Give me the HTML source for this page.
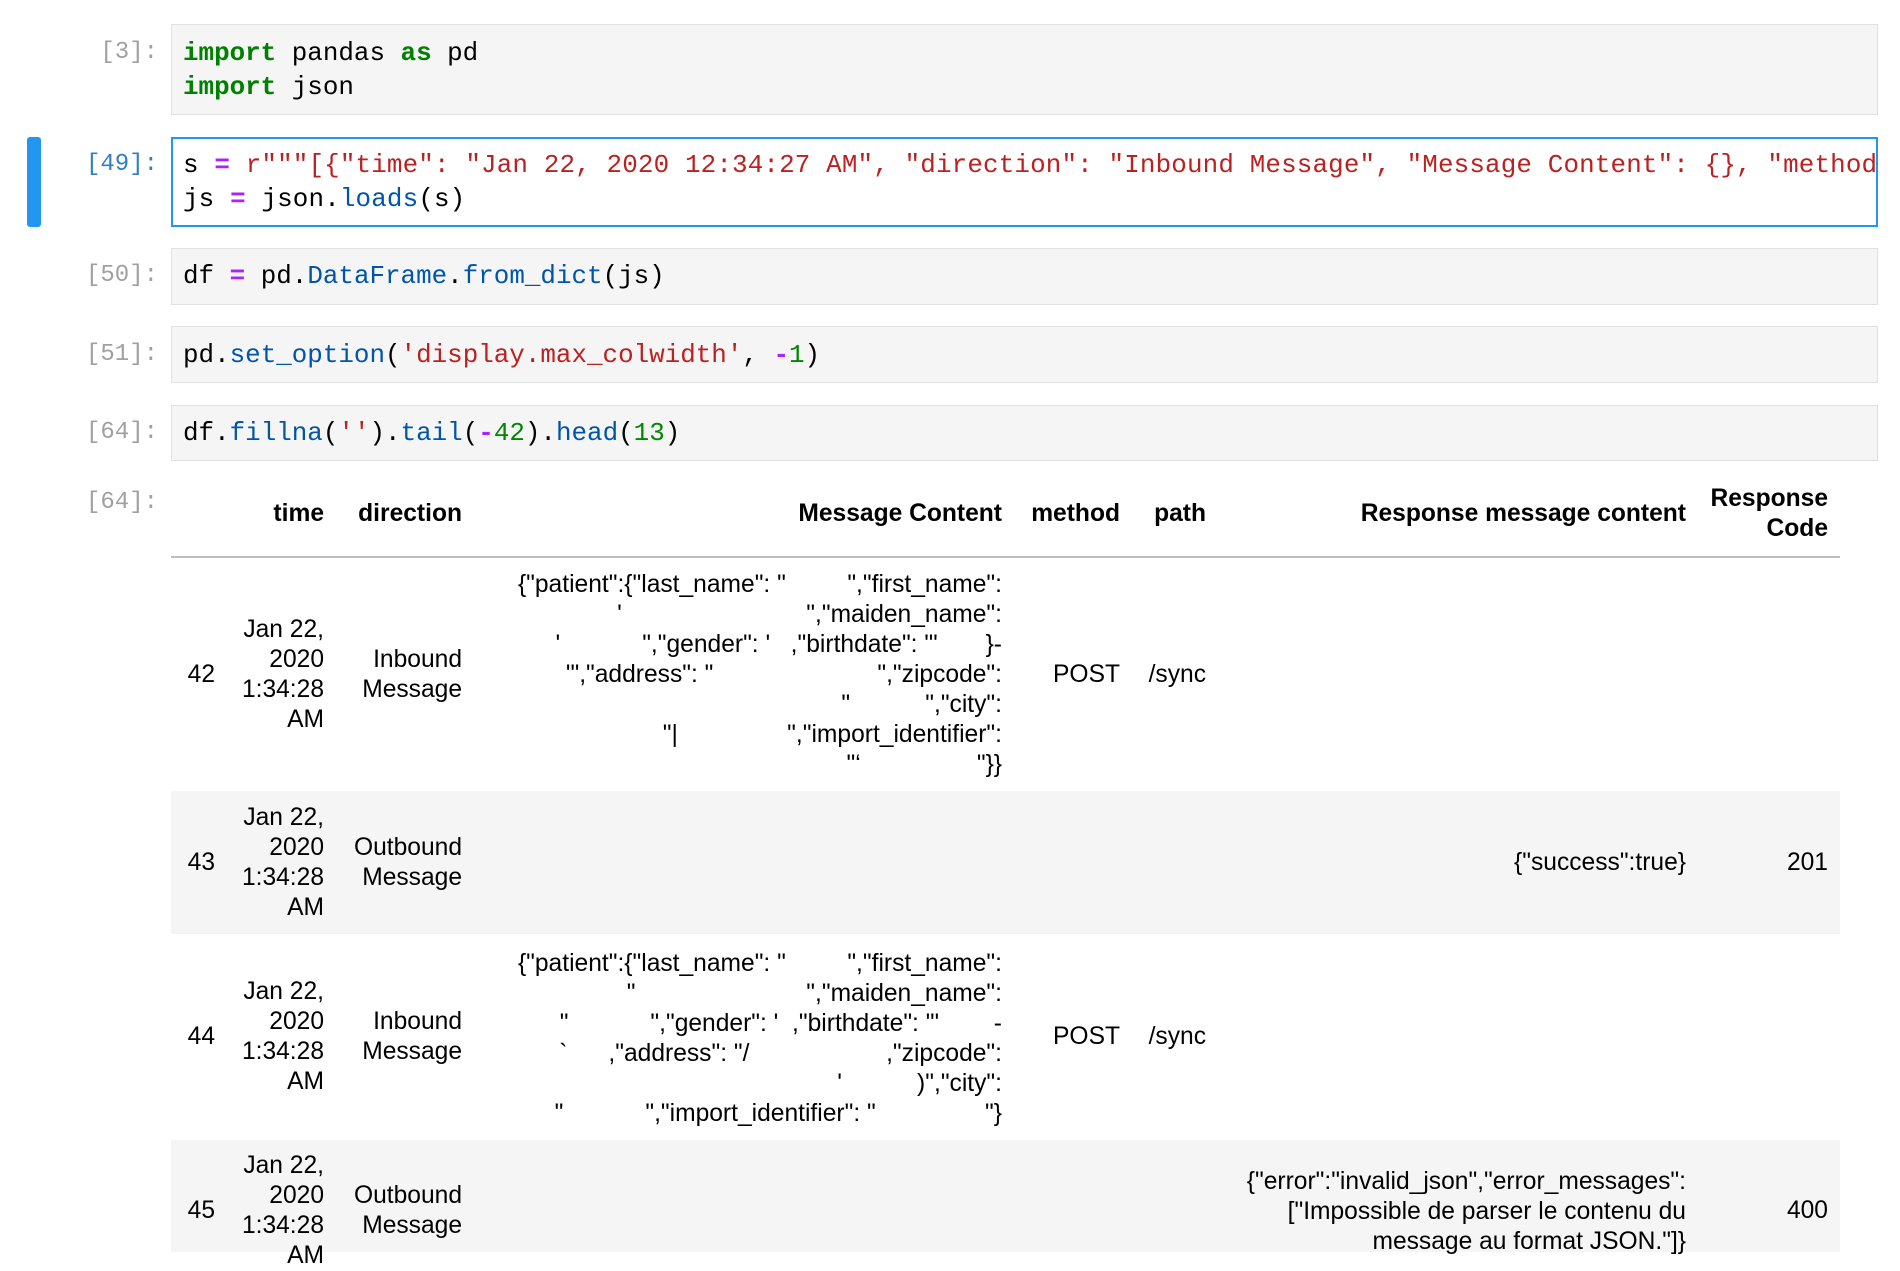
<!DOCTYPE html>
<html><head><meta charset="utf-8">
<style>
body{margin:0;width:1900px;height:1252px;overflow:hidden;background:#fff;position:relative}
.box{position:absolute;left:171px;width:1707px;background:#f5f5f5;border:1px solid #e0e0e0;box-sizing:border-box}
.code{position:absolute;left:183px;font-family:"Liberation Mono",monospace;font-size:25.9px;line-height:34px;white-space:pre;color:#000}
.pr{position:absolute;right:1742px;font-family:"Liberation Mono",monospace;font-size:24px;line-height:34px;color:#a0a0a0;white-space:pre}
.k{color:#008000;font-weight:bold}.o{color:#aa22ff;font-weight:bold}.s{color:#ba2121}.f{color:#0055aa}.n{color:#008800}
.c{position:absolute;font-family:"Liberation Sans",sans-serif;font-size:24.6px;line-height:30px;text-align:right;white-space:pre;color:#000}
.h{font-weight:bold}
</style></head><body>
<div class="box" style="top:24px;height:91px"></div>
<div class="pr" style="top:36px">[3]:</div>
<div class="code" style="top:36px"><span class="k">import</span> pandas <span class="k">as</span> pd
<span class="k">import</span> json</div>

<div style="position:absolute;left:27px;top:137px;width:14px;height:90px;background:#2196f3;border-radius:3px"></div>
<div class="box" style="top:137px;height:90px;background:#fff;border:2px solid #2196f3;overflow:hidden"></div>
<div class="pr" style="top:148px;color:#307fc1">[49]:</div>
<div class="code" style="top:148px;width:1693px;overflow:hidden;letter-spacing:0.15px">s <span class="o">=</span> <span class="s">r"""[{"time": "Jan 22, 2020 12:34:27 AM", "direction": "Inbound Message", "Message Content": {}, "method"</span>
js <span class="o">=</span> json<span>.</span><span class="f">loads</span>(s)</div>

<div class="box" style="top:248px;height:57px"></div>
<div class="pr" style="top:259px">[50]:</div>
<div class="code" style="top:259px">df <span class="o">=</span> pd.<span class="f">DataFrame</span>.<span class="f">from_dict</span>(js)</div>

<div class="box" style="top:326px;height:57px"></div>
<div class="pr" style="top:338px">[51]:</div>
<div class="code" style="top:338px">pd.<span class="f">set_option</span>(<span class="s">'display.max_colwidth'</span>, <span class="o">-</span><span class="n">1</span>)</div>

<div class="box" style="top:405px;height:56px"></div>
<div class="pr" style="top:416px">[64]:</div>
<div class="code" style="top:416px">df.<span class="f">fillna</span>(<span class="s">''</span>).<span class="f">tail</span>(<span class="o">-</span><span class="n">42</span>).<span class="f">head</span>(<span class="n">13</span>)</div>

<div class="pr" style="top:486px">[64]:</div>

<div style="position:absolute;left:171px;top:556px;width:1669px;height:2px;background:#bdbdbd"></div>
<div style="position:absolute;left:171px;top:791px;width:1669px;height:143px;background:#f5f5f5"></div>
<div style="position:absolute;left:171px;top:1140px;width:1669px;height:112px;background:#f5f5f5"></div>

<div class="c h" style="top:499px;right:1576px">time</div>
<div class="c h" style="top:499px;right:1438px">direction</div>
<div class="c h" style="top:499px;right:898px">Message Content</div>
<div class="c h" style="top:499px;right:780px">method</div>
<div class="c h" style="top:499px;right:694px">path</div>
<div class="c h" style="top:499px;right:214px">Response message content</div>
<div class="c h" style="top:484px;right:72px">Response
Code</div>

<div class="c" style="top:660px;right:1685px">42</div>
<div class="c" style="top:615px;right:1576px">Jan 22,
2020
1:34:28
AM</div>
<div class="c" style="top:645px;right:1438px">Inbound
Message</div>
<div class="c" style="top:570px;right:898px">{"patient":{"last_name": "         ","first_name":
'                           ","maiden_name":
'            ","gender": '   ,"birthdate": "'       }-
'","address": "                        ","zipcode":
"           ","city":
"|                ","import_identifier":
"‘                 "}}</div>
<div class="c" style="top:660px;right:780px">POST</div>
<div class="c" style="top:660px;right:694px">/sync</div>

<div class="c" style="top:848px;right:1685px">43</div>
<div class="c" style="top:803px;right:1576px">Jan 22,
2020
1:34:28
AM</div>
<div class="c" style="top:833px;right:1438px">Outbound
Message</div>
<div class="c" style="top:848px;right:214px">{"success":true}</div>
<div class="c" style="top:848px;right:72px">201</div>

<div class="c" style="top:1022px;right:1685px">44</div>
<div class="c" style="top:977px;right:1576px">Jan 22,
2020
1:34:28
AM</div>
<div class="c" style="top:1007px;right:1438px">Inbound
Message</div>
<div class="c" style="top:949px;right:898px">{"patient":{"last_name": "         ","first_name":
"                         ","maiden_name":
"            ","gender": '  ,"birthdate": "'        -
`      ,"address": "/                    ,"zipcode":
'           )","city":
"            ","import_identifier": "                "}</div>
<div class="c" style="top:1022px;right:780px">POST</div>
<div class="c" style="top:1022px;right:694px">/sync</div>

<div class="c" style="top:1196px;right:1685px">45</div>
<div class="c" style="top:1151px;right:1576px">Jan 22,
2020
1:34:28
AM</div>
<div class="c" style="top:1181px;right:1438px">Outbound
Message</div>
<div class="c" style="top:1167px;right:214px">{"error":"invalid_json","error_messages":
["Impossible de parser le contenu du
message au format JSON."]}</div>
<div class="c" style="top:1196px;right:72px">400</div>
</body></html>
